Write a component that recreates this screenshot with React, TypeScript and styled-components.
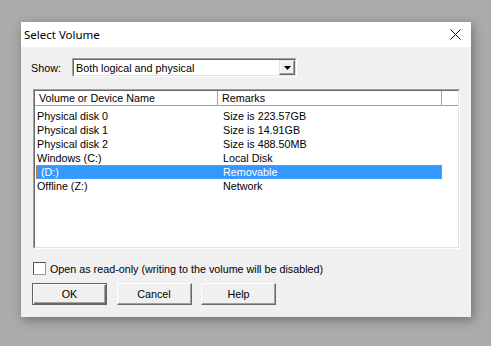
import React from 'react';
import styled, { createGlobalStyle, css } from 'styled-components';

const GlobalStyle = createGlobalStyle`
  html, body { margin: 0; padding: 0; }
  body {
    background: #ababab;
    font-family: "Liberation Sans", Arial, sans-serif;
    font-size: 10.75px;
    color: #000;
  }
`;

interface Volume {
  name: string;
  remarks: string;
}

const volumes: Volume[] = [
  { name: 'Physical disk 0', remarks: 'Size is 223.57GB' },
  { name: 'Physical disk 1', remarks: 'Size is 14.91GB' },
  { name: 'Physical disk 2', remarks: 'Size is 488.50MB' },
  { name: 'Windows (C:)', remarks: 'Local Disk' },
  { name: '\u00a0(D:)', remarks: 'Removable' },
  { name: 'Offline (Z:)', remarks: 'Network' },
];

const SELECTED = 4;
const COL1 = 183;
const COL2 = 224;

const Desktop = styled.div`
  height: 346px;
  box-sizing: border-box;
  padding: 22px 0 0 21px;
`;

const Dialog = styled.div`
  width: 450px;
  height: 295px;
  background: #f0f0f0;
  box-shadow: 2px 3px 10px rgba(0, 0, 0, 0.35);
  display: flex;
  flex-direction: column;
`;

const TitleBar = styled.div`
  height: 25px;
  background: #fff;
  display: flex;
  align-items: center;
  justify-content: space-between;
  padding: 0 10px 0 3px;
`;

const Title = styled.span`
  font-family: "Noto Sans", "Open Sans", sans-serif;
  font-size: 11.5px;
  color: #000;
`;

const Body = styled.div`
  padding: 11px 11px 0 10px;
  display: flex;
  flex-direction: column;
`;

const ShowRow = styled.div`
  display: flex;
  align-items: center;
  height: 19px;
`;

const Label = styled.span`
  width: 41px;
`;

const sunken = css`
  border-style: solid;
  border-width: 1px;
  border-color: #a0a0a0 #fff #fff #a0a0a0;
`;

const Combo = styled.div`
  ${sunken};
  width: 225px;
  height: 19px;
  box-sizing: border-box;
  display: flex;
`;

const ComboInner = styled.div`
  flex: 1;
  display: flex;
  align-items: center;
  border-style: solid;
  border-width: 1px;
  border-color: #696969 #e3e3e3 #e3e3e3 #696969;
  background: #fff;
`;

const ComboText = styled.span`
  flex: 1;
  padding-left: 2px;
`;

const DropButton = styled.div`
  width: 16px;
  height: 15px;
  box-sizing: border-box;
  background: #f0f0f0;
  border-style: solid;
  border-width: 1px;
  border-color: #e3e3e3 #696969 #696969 #e3e3e3;
  box-shadow: inset -1px -1px 0 #a0a0a0, inset 1px 1px 0 #fff;
  display: flex;
  align-items: center;
  justify-content: center;
`;

const ListView = styled.div`
  ${sunken};
  margin: 12px 0 0 2px;
  width: 427px;
  height: 160px;
  box-sizing: border-box;
  display: flex;
`;

const ListInner = styled.div`
  flex: 1;
  background: #fff;
  border-style: solid;
  border-width: 1px;
  border-color: #696969 #e3e3e3 #e3e3e3 #696969;
`;

const Header = styled.div`
  display: flex;
  height: 15px;
  border-bottom: 1px solid #a0a0a0;
  box-sizing: border-box;
`;

const HeaderCell = styled.div<{ $width?: number }>`
  ${(p) => (p.$width ? `width: ${p.$width}px;` : 'flex: 1;')}
  box-sizing: border-box;
  padding-left: 4px;
  border-right: ${(p) => (p.$width ? '1px solid #a0a0a0' : 'none')};
  line-height: 14px;
  white-space: nowrap;
`;

const Rows = styled.div`
  padding-top: 3px;
`;

const Row = styled.div<{ $selected?: boolean }>`
  display: flex;
  height: 14px;
  line-height: 14px;
  width: ${COL1 + COL2}px;
  box-sizing: border-box;
  white-space: nowrap;
  ${(p) =>
    p.$selected &&
    css`
      background: #3399ff;
      color: #fff;
      margin-left: 1px;
      width: ${COL1 + COL2 - 1}px;
      outline: 1px dotted #d08a40;
      outline-offset: -1px;
    `}
`;

const Cell = styled.div<{ $width: number; $pad: number }>`
  width: ${(p) => p.$width}px;
  padding-left: ${(p) => p.$pad}px;
  box-sizing: border-box;
`;

const CheckRow = styled.label`
  display: flex;
  align-items: center;
  gap: 4px;
  margin: 13px 0 0 2px;
  height: 13px;
`;

const CheckBox = styled.span`
  width: 13px;
  height: 13px;
  box-sizing: border-box;
  background: #fff;
  border-style: solid;
  border-width: 1px;
  border-color: #555 #9a9a9a #9a9a9a #555;
`;

const ButtonRow = styled.div`
  display: flex;
  gap: 9.5px;
  margin: 8px 0 0 1px;
`;

const Button = styled.button<{ $default?: boolean }>`
  width: 75px;
  height: 22px;
  box-sizing: border-box;
  background: #f0f0f0;
  font: inherit;
  color: #000;
  padding: 0;
  border-style: solid;
  border-width: 1px;
  border-color: #fff #696969 #696969 #fff;
  box-shadow: inset -1px -1px 0 #a0a0a0;
  ${(p) =>
    p.$default &&
    css`
      border: 1px solid #646464;
      box-shadow: inset 1px 1px 0 #fff, inset -1px -1px 0 #696969, inset -2px -2px 0 #a0a0a0;
    `}
`;

const CloseIcon = () => (
  <svg width="11" height="11" viewBox="0 0 11 11">
    <path d="M0.5 0.5 L10.5 10.5 M10.5 0.5 L0.5 10.5" stroke="#111" strokeWidth="1" fill="none" />
  </svg>
);

const ArrowDown = () => (
  <svg width="7" height="4" viewBox="0 0 7 4">
    <path d="M0 0 H7 L3.5 4 Z" fill="#000" />
  </svg>
);

const App: React.FC = () => (
  <>
    <GlobalStyle />
    <Desktop>
      <Dialog>
        <TitleBar>
          <Title>Select Volume</Title>
          <CloseIcon />
        </TitleBar>
        <Body>
          <ShowRow>
            <Label>Show:</Label>
            <Combo>
              <ComboInner>
                <ComboText>Both logical and physical</ComboText>
                <DropButton>
                  <ArrowDown />
                </DropButton>
              </ComboInner>
            </Combo>
          </ShowRow>
          <ListView>
            <ListInner>
              <Header>
                <HeaderCell $width={COL1}>Volume or Device Name</HeaderCell>
                <HeaderCell $width={COL2}>Remarks</HeaderCell>
                <HeaderCell />
              </Header>
              <Rows>
                {volumes.map((v, i) => (
                  <Row key={v.name} $selected={i === SELECTED}>
                    <Cell $width={i === SELECTED ? COL1 - 1 : COL1} $pad={2}>
                      {v.name}
                    </Cell>
                    <Cell $width={COL2} $pad={5}>
                      {v.remarks}
                    </Cell>
                  </Row>
                ))}
              </Rows>
            </ListInner>
          </ListView>
          <CheckRow>
            <CheckBox />
            <span>Open as read-only (writing to the volume will be disabled)</span>
          </CheckRow>
          <ButtonRow>
            <Button $default>OK</Button>
            <Button>Cancel</Button>
            <Button>Help</Button>
          </ButtonRow>
        </Body>
      </Dialog>
    </Desktop>
  </>
);

export default App;
